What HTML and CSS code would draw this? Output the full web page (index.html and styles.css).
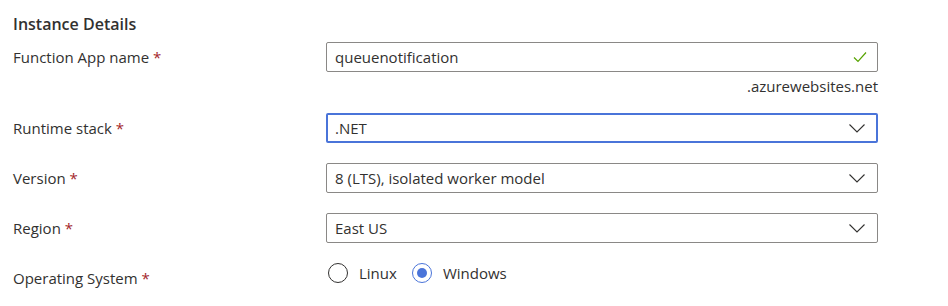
FILE: index.html
```html
<!DOCTYPE html>
<html lang="en">
<head>
  <meta charset="UTF-8" />
  <title>Instance Details</title>
  <link rel="stylesheet" href="styles.css">
</head>
<body>
  <h2 class="section-title">Instance Details</h2>

  <div class="form-row">
    <label class="field-label">Function App name <span class="req">*</span></label>
    <div class="field">
      <div class="text-box">
        <span class="value">queuenotification</span>
        <svg class="check" width="14" height="12" viewBox="0 0 14 12"><path d="M1 6.5 L5 10.5 L13 1.5" fill="none" stroke="#57a300" stroke-width="1.2"/></svg>
      </div>
      <div class="suffix">.azurewebsites.net</div>
    </div>
  </div>

  <div class="form-row">
    <label class="field-label">Runtime stack <span class="req">*</span></label>
    <div class="field">
      <div class="text-box dropdown focused">
        <span class="value">.NET</span>
        <svg class="chevron" width="16" height="9" viewBox="0 0 16 9"><path d="M0.5 0.5 L8 8 L15.5 0.5" fill="none" stroke="#323130" stroke-width="1.1"/></svg>
      </div>
    </div>
  </div>

  <div class="form-row">
    <label class="field-label">Version <span class="req">*</span></label>
    <div class="field">
      <div class="text-box dropdown">
        <span class="value">8 (LTS), isolated worker model</span>
        <svg class="chevron" width="16" height="9" viewBox="0 0 16 9"><path d="M0.5 0.5 L8 8 L15.5 0.5" fill="none" stroke="#323130" stroke-width="1.1"/></svg>
      </div>
    </div>
  </div>

  <div class="form-row">
    <label class="field-label">Region <span class="req">*</span></label>
    <div class="field">
      <div class="text-box dropdown">
        <span class="value">East US</span>
        <svg class="chevron" width="16" height="9" viewBox="0 0 16 9"><path d="M0.5 0.5 L8 8 L15.5 0.5" fill="none" stroke="#323130" stroke-width="1.1"/></svg>
      </div>
    </div>
  </div>

  <div class="form-row radio-row">
    <label class="field-label">Operating System <span class="req">*</span></label>
    <div class="field radios">
      <span class="radio"><span class="dot"></span>Linux</span>
      <span class="radio checked"><span class="dot"></span>Windows</span>
    </div>
  </div>
</body>
</html>
```

FILE: styles.css
```css
body {
  margin: 0;
  padding: 13px 13px 0;
  font-family: "Open Sans", "Noto Sans", sans-serif;
  font-size: 15px;
  color: #323130;
  background: #fff;
}
.section-title {
  margin: 0 0 7px;
  font-size: 16px;
  font-weight: 600;
  line-height: 22px;
}
.form-row {
  display: grid;
  grid-template-columns: 313px 552px;
  margin-bottom: 20px;
}
.field-label {
  height: 30px;
  line-height: 30px;
}
.req {
  color: #a4262c;
}
.text-box {
  box-sizing: border-box;
  height: 30px;
  border: 1px solid #8a8886;
  border-radius: 2px;
  display: flex;
  align-items: center;
  justify-content: space-between;
  padding: 0 10px 0 8px;
}
.text-box.focused {
  border: 2px solid #4a74d9;
  padding: 0 9px 0 7px;
}
.chevron {
  margin-right: 2px;
}
.suffix {
  text-align: right;
  margin-top: 4px;
  line-height: 20px;
  margin-bottom: -3px;
}
.radio-row .field-label {
  height: 20px;
  line-height: 20px;
  margin-top: 5px;
}
.radios {
  display: flex;
  align-items: center;
  gap: 15px;
  height: 20px;
  padding-left: 2px;
}
.radio {
  display: flex;
  align-items: center;
}
.dot {
  box-sizing: border-box;
  width: 20px;
  height: 20px;
  border: 1px solid #323130;
  border-radius: 50%;
  margin-right: 11px;
  position: relative;
}
.radio.checked .dot {
  border-color: #4a74d9;
}
.radio.checked .dot::after {
  content: "";
  position: absolute;
  left: 4px;
  top: 4px;
  width: 10px;
  height: 10px;
  border-radius: 50%;
  background: #4a74d9;
}
```
